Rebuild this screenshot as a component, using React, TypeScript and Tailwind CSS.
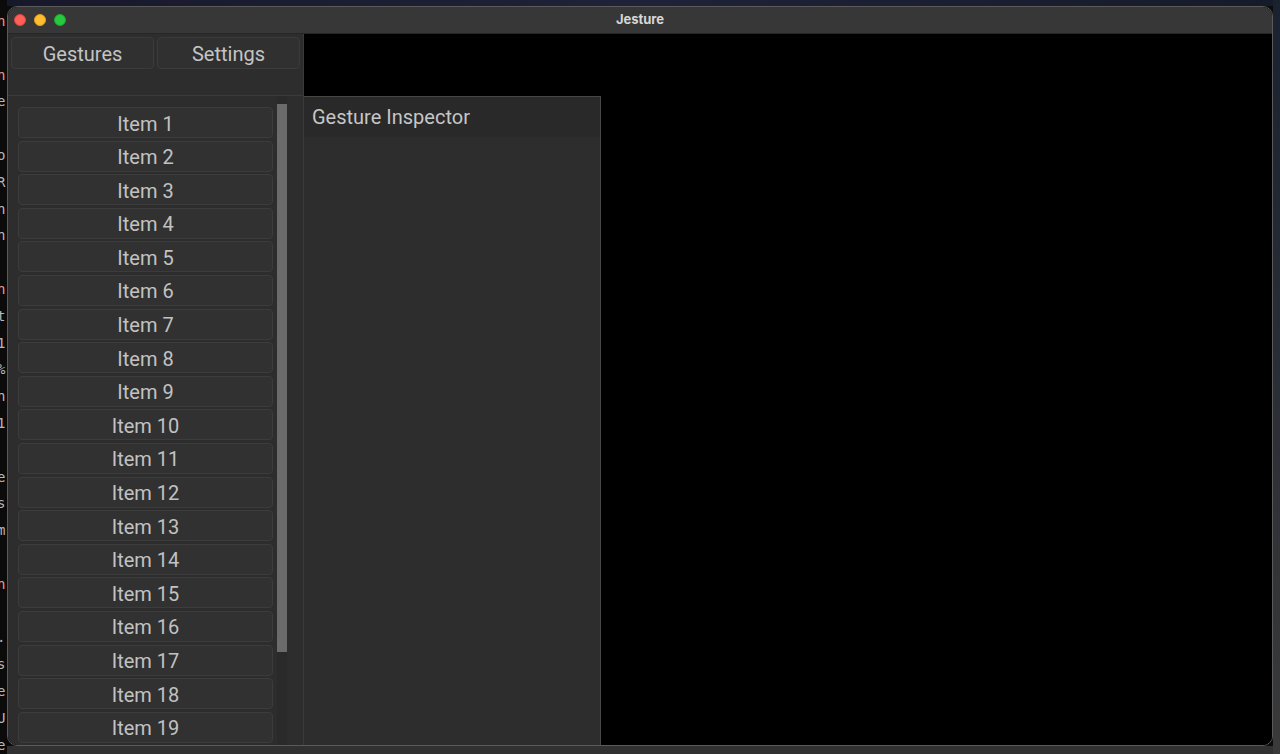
import React from 'react';

const codeLines: { ch: string; warm?: boolean }[] = [
  { ch: 'n', warm: true },
  { ch: '' },
  { ch: 'n', warm: true },
  { ch: 'e' },
  { ch: '' },
  { ch: 'o' },
  { ch: 'R' },
  { ch: 'n' },
  { ch: 'n' },
  { ch: '' },
  { ch: 'n', warm: true },
  { ch: 't' },
  { ch: '1' },
  { ch: '%' },
  { ch: 'n' },
  { ch: '1' },
  { ch: '' },
  { ch: 'e' },
  { ch: 's' },
  { ch: 'm' },
  { ch: '' },
  { ch: 'n', warm: true },
  { ch: '' },
  { ch: '.' },
  { ch: 's' },
  { ch: 'e' },
  { ch: 'U' },
  { ch: 'e' },
];

const items = Array.from({ length: 19 }, (_, i) => `Item ${i + 1}`);

const TrafficLights = () => (
  <div className="flex items-center gap-[8px] pl-[6px]">
    <span className="w-[12px] h-[12px] rounded-full bg-[#fe5f57] border border-[#e0443e]" />
    <span className="w-[12px] h-[12px] rounded-full bg-[#febc2e] border border-[#dea123]" />
    <span className="w-[12px] h-[12px] rounded-full bg-[#28c840] border border-[#1aab29]" />
  </div>
);

const TabButton: React.FC<{ label: string }> = ({ label }) => (
  <button className="flex-1 h-[32px] pt-[2px] rounded-[4px] bg-[#303030] border border-[#3b3b3b] text-[20px] text-[#c4c4c4] leading-none">
    {label}
  </button>
);

export default function App() {
  return (
    <div
      className="w-[1280px] h-[754px] flex overflow-hidden bg-[#0c0c0e]"
      style={{ fontFamily: 'Roboto, "Noto Sans", sans-serif' }}
    >
      {/* code editor peeking out behind the window */}
      <div
        className="w-[7px] shrink-0 overflow-hidden pt-[8px] bg-[#0b0b0c]"
        style={{ fontFamily: '"DejaVu Sans Mono", monospace' }}
      >
        {codeLines.map((l, i) => (
          <div
            key={i}
            className={`h-[26.8px] leading-[26.8px] text-[14px] -ml-[3px] ${l.warm ? 'text-[#e39a84]' : 'text-[#b8b8b8]'}`}
          >
            {l.ch || '\u00a0'}
          </div>
        ))}
      </div>

      <div className="w-[1266px] shrink-0 flex flex-col">
        <div className="h-[6px] bg-gradient-to-r from-[#17182a] via-[#1f2238] to-[#161b2a]" />

        {/* window */}
        <div className="h-[740px] rounded-[10px] border border-[#5a5a5a] bg-black overflow-hidden flex flex-col">
          <div className="h-[27px] shrink-0 bg-[#373737] border-b border-[#262626] flex items-center relative">
            <TrafficLights />
            <div className="absolute inset-0 flex items-center justify-center text-[13px] font-bold text-[#d6d6d6]" style={{ fontFamily: 'Inter, sans-serif' }}>
              Jesture
            </div>
          </div>

          <div className="flex-1 flex min-h-0">
            {/* left panel */}
            <div className="w-[296px] shrink-0 bg-[#2d2d2d] border-r border-[#3a3a3a] flex flex-col">
              <div className="h-[62px] shrink-0 border-b border-[#3a3a3a] px-[3px] pt-[3px]">
                <div className="flex gap-[3px]">
                  <TabButton label="Gestures" />
                  <TabButton label="Settings" />
                </div>
              </div>

              <div className="flex-1 flex min-h-0 overflow-hidden pl-[10px]">
                <div className="w-[255px] pt-[11px] flex flex-col gap-[2.6px]">
                  {items.map((it) => (
                    <div
                      key={it}
                      className="h-[31px] shrink-0 pt-[2px] rounded-[4px] bg-[#313131] border border-[#3c3c3c] flex items-center justify-center text-[20px] text-[#c2c2c2]"
                    >
                      {it}
                    </div>
                  ))}
                </div>
                <div className="w-[10px] ml-[4px] bg-[#2a2a2a] pt-[8px] flex flex-col">
                  <div className="h-[548px] bg-[#6b6b6b]" />
                </div>
              </div>
            </div>

            {/* right area */}
            <div className="flex-1 flex flex-col bg-black">
              <div className="h-[62px] shrink-0" />
              <div className="w-[297px] flex-1 bg-[#2d2d2d] border-t border-r border-[#474747] flex flex-col">
                <div className="h-[40px] bg-[#292929] flex items-center pl-[8px] text-[20px] text-[#c6c6c6]">
                  Gesture Inspector
                </div>
              </div>
            </div>
          </div>
        </div>

        <div className="h-[8px] bg-[#313131]" />
      </div>

      <div className="flex-1 bg-gradient-to-b from-[#1a2230] to-[#3a3a3a]" />
    </div>
  );
}
